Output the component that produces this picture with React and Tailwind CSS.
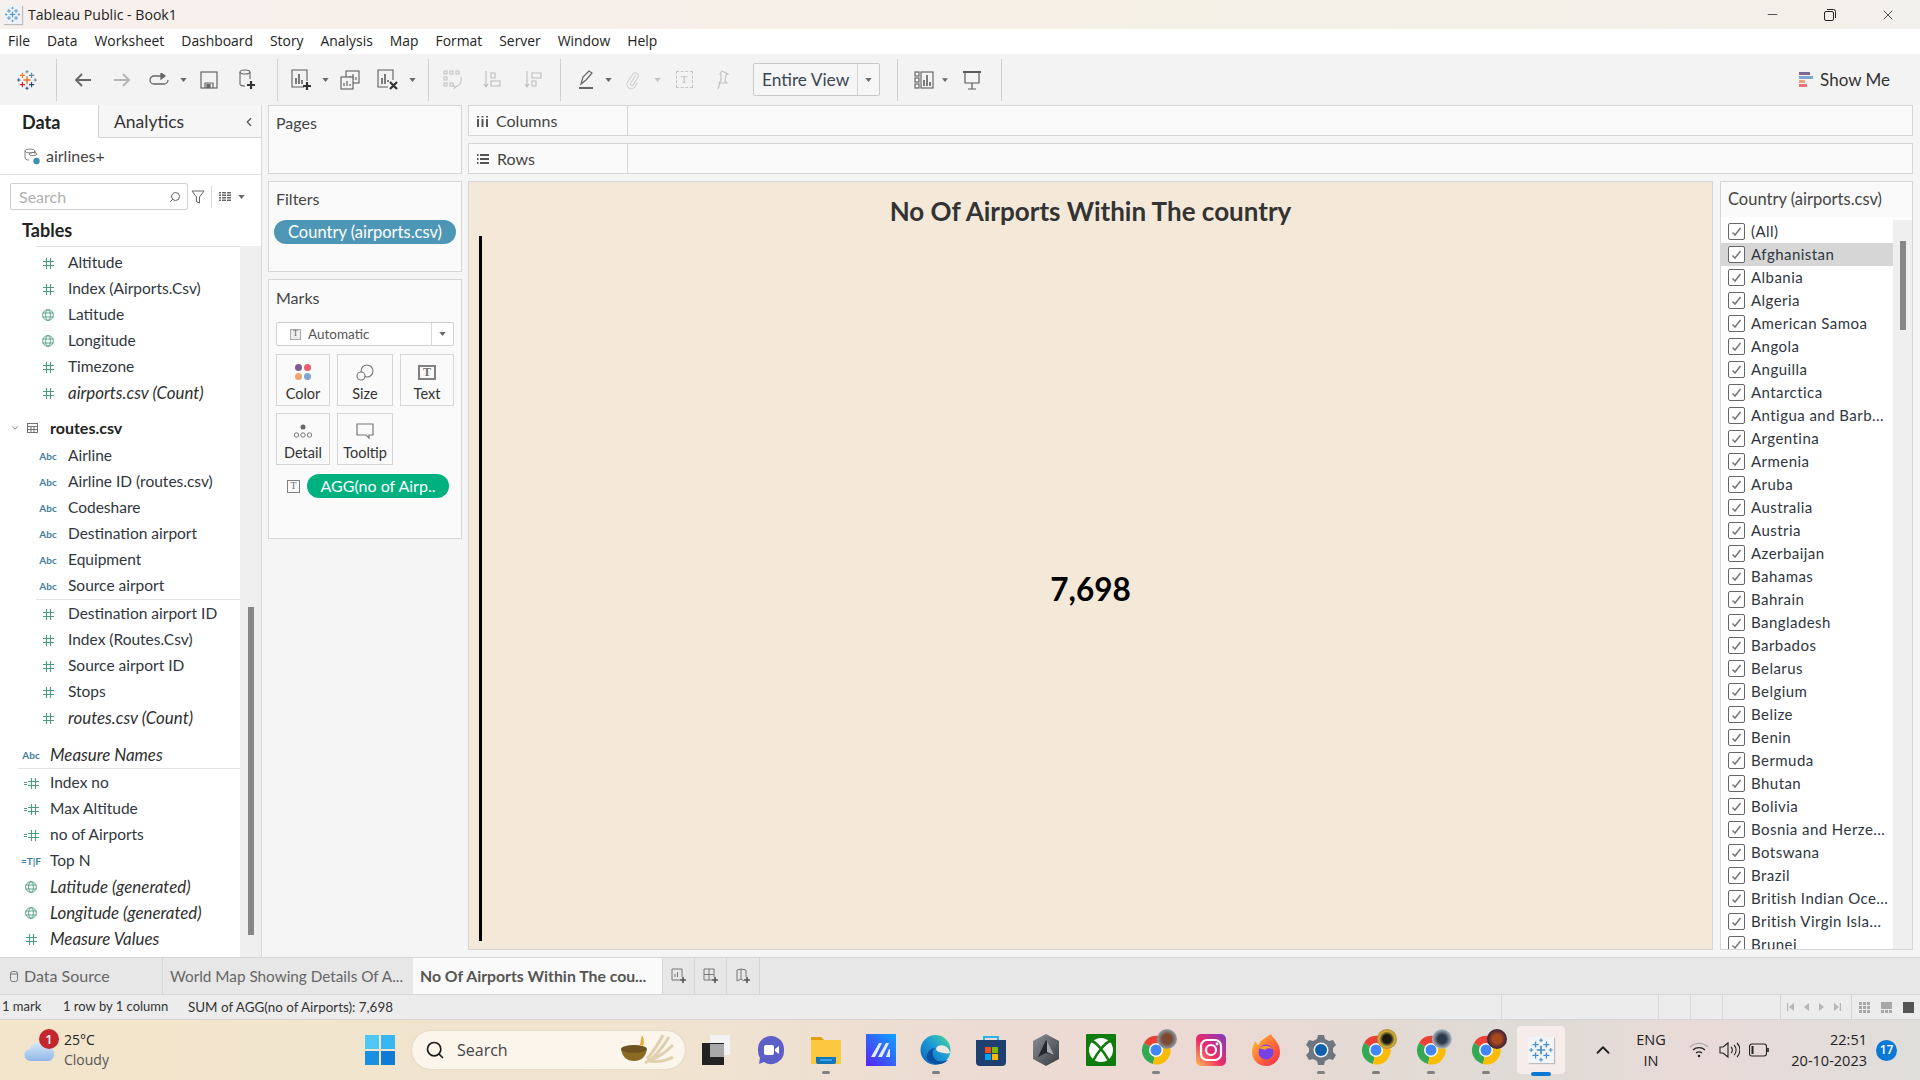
import React from 'react';
import { Search, X, Minus, ChevronUp, ChevronDown, ChevronLeft } from 'lucide-react';

const COUNTRIES = [
  '(All)', 'Afghanistan', 'Albania', 'Algeria', 'American Samoa', 'Angola', 'Anguilla', 'Antarctica',
  'Antigua and Barb...', 'Argentina', 'Armenia', 'Aruba', 'Australia', 'Austria', 'Azerbaijan', 'Bahamas',
  'Bahrain', 'Bangladesh', 'Barbados', 'Belarus', 'Belgium', 'Belize', 'Benin', 'Bermuda', 'Bhutan', 'Bolivia',
  'Bosnia and Herze...', 'Botswana', 'Brazil', 'British Indian Oce...', 'British Virgin Isla...', 'Brunei'
];

const MENU = ['File', 'Data', 'Worksheet', 'Dashboard', 'Story', 'Analysis', 'Map', 'Format', 'Server', 'Window', 'Help'];

const Caret = ({ light }) => (
  <svg width="7" height="4" viewBox="0 0 8 5"><path d="M0 0h8L4 5z" fill={light ? '#c4c4c4' : '#6a6a6a'} /></svg>
);

const Sep = () => <div className="h-[42px] w-px bg-[#cfcfcf]" />;

const Slot = ({ className, children }) => (
  <div className={`flex items-center justify-center ${className}`}>{children}</div>
);

const TableauMark = ({ size = 24, mono }) => {
  const c = mono
    ? ['#4a8fc4', '#4a8fc4', '#4a8fc4', '#4a8fc4', '#4a8fc4', '#4a8fc4']
    : ['#e8762d', '#c72035', '#5b879b', '#1f447e', '#59879b', '#e8762d'];
  const cross = (x, y, r, col, w) => (
    <path d={`M${x - r} ${y}H${x + r}M${x} ${y - r}V${y + r}`} stroke={col} strokeWidth={w} fill="none" />
  );
  return (
    <svg width={size} height={size} viewBox="0 0 24 24">
      {cross(12, 12, 4, c[5], 1.6)}
      {cross(7, 7, 2.8, c[0], 1.2)}
      {cross(17, 7, 2.8, c[2], 1.2)}
      {cross(7, 17, 2.8, c[1], 1.2)}
      {cross(17, 17, 2.8, c[3], 1.2)}
      {cross(12, 3, 1.8, c[2], 1)}
      {cross(12, 21, 1.8, c[3], 1)}
      {cross(3, 12, 1.8, c[3], 1)}
      {cross(21, 12, 1.8, c[4], 1)}
    </svg>
  );
};

function Toolbar() {
  return (
    <div className="flex h-[51px] shrink-0 items-center bg-[#f3f3f3]">
      <Slot className="w-[54px]"><TableauMark size={22} /></Slot>
      <div className="ml-[2px]"><Sep /></div>
      <Slot className="w-[52px]">
        <svg width="18" height="16" viewBox="0 0 18 16" fill="none" stroke="#666" strokeWidth="1.8"><path d="M17 8H2M8 2 2 8l6 6" /></svg>
      </Slot>
      <Slot className="w-[26px]">
        <svg width="18" height="16" viewBox="0 0 18 16" fill="none" stroke="#b3b3b3" strokeWidth="1.8"><path d="M1 8h15M10 2l6 6-6 6" /></svg>
      </Slot>
      <Slot className="ml-[5px] w-[38px]">
        <svg width="20" height="14" viewBox="0 0 20 14" fill="none" stroke="#666" strokeWidth="1.3"><path d="M15 3H5a4 4 0 0 0 0 8h10a4 4 0 0 0 4-4" /><path d="M12 0l4 3-4 3z" fill="#666" /></svg>
      </Slot>
      <Slot className="w-[10px]"><Caret /></Slot>
      <Slot className="w-[42px]">
        <svg width="18" height="18" viewBox="0 0 18 18" fill="none" stroke="#666" strokeWidth="1.2"><rect x="1" y="1" width="16" height="16" /><path d="M5 17v-5h8v5" /><rect x="7" y="13.5" width="3" height="3" fill="#666" /></svg>
      </Slot>
      <Slot className="w-[34px]">
        <svg width="18" height="22" viewBox="0 0 18 22" fill="none" stroke="#666" strokeWidth="1.1"><ellipse cx="7" cy="3" rx="5" ry="2" /><path d="M2 3v12c0 1 1.5 2 5 2M12 3v7" /><path d="M13 12v8M9 16h8" stroke="#333" strokeWidth="2.2" /></svg>
      </Slot>
      <div className="ml-[13px]"><Sep /></div>
      <Slot className="ml-[8px] w-[32px]">
        <svg width="22" height="22" viewBox="0 0 22 22" fill="none" stroke="#5c5c5c" strokeWidth="1.1"><path d="M13 18H1V1h15v11" /><path d="M5 15V9M8 15V5M11 15v-4" strokeWidth="1.6" /><path d="M16 13v8M12 17h8" stroke="#333" strokeWidth="2.2" /></svg>
      </Slot>
      <Slot className="ml-[2px] w-[10px]"><Caret /></Slot>
      <Slot className="w-[40px]">
        <svg width="20" height="20" viewBox="0 0 20 20" fill="none" stroke="#5c5c5c" strokeWidth="1.1"><rect x="6" y="1" width="13" height="12" fill="#f3f3f3" /><path d="M10 10V6M13 10V4M16 10V7" /><rect x="1" y="7" width="12" height="12" fill="#f3f3f3" /><path d="M4 16v-3M7 16v-5M10 16v-2" /></svg>
      </Slot>
      <Slot className="w-[36px]">
        <svg width="22" height="22" viewBox="0 0 22 22" fill="none" stroke="#5c5c5c" strokeWidth="1.1"><path d="M11 18H1V1h15v10" /><path d="M5 15V9M8 15V5M11 13v-2" strokeWidth="1.6" /><path d="M13 13l7 7M20 13l-7 7" stroke="#333" strokeWidth="2.2" /></svg>
      </Slot>
      <Slot className="ml-[1px] w-[10px]"><Caret /></Slot>
      <div className="ml-[11px]"><Sep /></div>
      <Slot className="w-[48px]">
        <svg width="20" height="20" viewBox="0 0 20 20" fill="none" stroke="#c2c2c2" strokeWidth="1.1"><path d="M1 1h3v3H1zM7 1h3v3H7zM13 1h3v3h-3zM1 7h3v3H1zM1 13h3v3H1zM7 13h3v3H7z" /><path d="M18 7c1 5-1 9-6 10" /><path d="M10 15l2 2-1 2" /></svg>
      </Slot>
      <Slot className="w-[30px]">
        <svg width="18" height="20" viewBox="0 0 18 20" fill="none" stroke="#bdbdbd" strokeWidth="1.1"><path d="M3 1v16M1 14l2 3 2-3" /><path d="M8 3h4v5H8zM8 11h9v5H8z" /></svg>
      </Slot>
      <Slot className="w-[52px]">
        <svg width="18" height="20" viewBox="0 0 18 20" fill="none" stroke="#bdbdbd" strokeWidth="1.1"><path d="M3 1v16M1 14l2 3 2-3" /><path d="M8 3h9v5H8zM8 11h4v5H8z" /></svg>
      </Slot>
      <div className="ml-px"><Sep /></div>
      <Slot className="ml-[9px] w-[32px]">
        <svg width="16" height="22" viewBox="0 0 16 22" fill="none" stroke="#666" strokeWidth="1.2"><path d="M3 15 5 8l6-6 3 2-6 7zM3 15l1-1" /><rect x="1" y="18" width="14" height="2" fill="#666" stroke="none" /></svg>
      </Slot>
      <Slot className="ml-[1px] w-[10px]"><Caret /></Slot>
      <Slot className="w-[40px]">
        <svg width="14" height="20" viewBox="0 0 16 22" fill="none" stroke="#cfcfcf" strokeWidth="1.2"><path d="M11 6 5 15a2 2 0 0 0 3 2l6-10a3.5 3.5 0 0 0-6-3L2 13a5 5 0 0 0 8 6l3-5" /></svg>
      </Slot>
      <Slot className="w-[8px]"><Caret light /></Slot>
      <Slot className="w-[46px]">
        <div className="flex h-[17px] w-[17px] items-center justify-center border border-dashed border-[#c4c4c4] font-['Liberation_Serif',serif] text-[11px] leading-none text-[#bdbdbd]">T</div>
      </Slot>
      <Slot className="w-[30px]">
        <svg width="16" height="20" viewBox="0 0 16 20" fill="none" stroke="#c4c4c4" strokeWidth="1.2"><path d="M8 1l6 3-2 1-1 6 2 2-8 0 2-2-0-6-1-1zM6 13l-2 6" /></svg>
      </Slot>
      <div className="ml-[16px] flex h-[33px] w-[127px] items-center rounded-[2px] border border-[#c9c9c9] bg-[#f6f6f6]">
        <div className="flex-1 pl-[8px] font-['Lato',sans-serif] text-[17.3px] leading-none text-[#3a4652]">Entire View</div>
        <Slot className="h-full w-[22px] border-l border-[#d4d4d4]"><Caret /></Slot>
      </div>
      <div className="ml-[17px]"><Sep /></div>
      <Slot className="ml-[8px] w-[36px]">
        <svg width="20" height="18" viewBox="0 0 20 18" fill="none" stroke="#5c5c5c" strokeWidth="1.1"><rect x="1" y="1" width="4" height="4" /><rect x="1" y="7" width="4" height="4" /><rect x="1" y="13" width="4" height="4" /><rect x="7" y="1" width="12" height="16" /><path d="M10 15V9M13 15V4M16 15v-4" strokeWidth="1.6" /></svg>
      </Slot>
      <Slot className="w-[6px]"><Caret /></Slot>
      <Slot className="w-[48px]">
        <svg width="18" height="20" viewBox="0 0 18 20" fill="none" stroke="#5c5c5c" strokeWidth="1.2"><path d="M0 2h18" strokeWidth="2" /><path d="M2 2v11h14V2M9 13v6M5 19h8" /></svg>
      </Slot>
      <div className="ml-[5px]"><Sep /></div>
      <div className="ml-auto mr-[30px] flex items-center gap-[7px]">
        <div className="flex w-[14px] flex-col gap-px">
          <div className="h-[3px] w-[11px] bg-[#7b6a94]" />
          <div className="h-[3px] w-[14px] bg-[#7fa6cf]" />
          <div className="h-[3px] w-[6px] bg-[#eba276]" />
          <div className="h-[3px] w-[8px] bg-[#ee6f7c]" />
        </div>
        <span className="font-['Lato',sans-serif] text-[17px] text-[#333]">Show Me</span>
      </div>
    </div>
  );
}

const Hash = ({ color = '#4c9c80' }) => (
  <svg width="11" height="11" viewBox="0 0 11 11" fill="none" stroke={color} strokeWidth="1.1"><path d="M3.5 0v11M7.5 0v11M0 3.5h11M0 7.5h11" /></svg>
);

const Globe = () => (
  <svg width="12" height="12" viewBox="0 0 12 12" fill="none" stroke="#4c9c80" strokeWidth="0.9"><circle cx="6" cy="6" r="5.4" /><ellipse cx="6" cy="6" rx="2.4" ry="5.4" /><path d="M0.6 4h10.8M0.6 8h10.8" /></svg>
);

const Abc = () => <span className="text-[10px] font-bold leading-none text-[#3f7d9e]">Abc</span>;

const CalcHash = () => (
  <span className="flex items-center gap-px">
    <span className="h-[3px] w-[3px] border-y border-[#4c9c80]" />
    <Hash />
  </span>
);

const TopN = () => (
  <span className="flex items-center text-[10px] font-bold leading-none text-[#3f7d9e]">=T|F</span>
);

const ICONS = { hash: <Hash />, globe: <Globe />, abc: <Abc />, calc: <CalcHash />, topn: <TopN /> };

function Field({ icon, label, italic, nested = true }) {
  return (
    <div className="flex h-[26px] items-center">
      <div className={nested ? 'flex w-[68px] justify-center pl-[32px] pr-[4px]' : 'flex w-[50px] justify-center pl-[14px] pr-[2px]'}>
        {ICONS[icon]}
      </div>
      <span className={italic ? 'text-[16.9px] italic text-[#2f2f2f]' : 'text-[15.5px] text-[#2f3640]'}>{label}</span>
    </div>
  );
}

function DataPane() {
  return (
    <div className="flex w-[262px] shrink-0 flex-col border-r border-[#d9d9d9] bg-white">
      <div className="flex h-[33px] shrink-0">
        <div className="flex w-[98px] items-center pl-[22px] pt-px text-[18px] font-bold text-[#222]">Data</div>
        <div className="flex flex-1 items-center justify-between border-b border-l border-[#d4d4d4] bg-[#f6f6f6] pl-[15px] pr-[5px] pt-[2px] text-[17.5px] text-[#333]">
          Analytics
          <ChevronLeft size={14} color="#555" />
        </div>
      </div>
      <div className="flex h-[37px] shrink-0 items-center border-b border-[#e2e2e2] pl-[24px]">
        <svg width="16" height="17" viewBox="0 0 16 17" fill="none" stroke="#777" strokeWidth="0.9"><ellipse cx="6" cy="3" rx="5" ry="2" /><path d="M1 3v7c0 1 1.5 2 4 2M11 3v3" /><ellipse cx="9" cy="6" rx="4" ry="1.6" /><circle cx="12.5" cy="13" r="3.2" fill="#3e8fb5" stroke="none" /></svg>
        <span className="ml-[6px] text-[16px] text-[#444]">airlines+</span>
      </div>
      <div className="flex h-[38px] shrink-0 items-center pl-[10px] pt-[5px]">
        <div className="flex h-[27px] w-[178px] items-center justify-between rounded-[2px] border border-[#cfcfcf] pl-[8px] pr-[6px] text-[16px] text-[#b0b0b0]">
          Search
          <Search size={12} color="#666" className="-scale-x-100" />
        </div>
        <svg className="ml-[3px]" width="14" height="14" viewBox="0 0 14 14" fill="none" stroke="#666" strokeWidth="1"><path d="M1 1h12L8.5 7v6l-3-1.5V7z" /></svg>
        <div className="ml-[6px] h-[22px] w-px bg-[#dcdcdc]" />
        <svg className="ml-[7px]" width="12" height="9" viewBox="0 0 12 9" fill="#666"><path d="M0 0h2v1.5H0zM3 0h4v1.5H3zM8 0h4v1.5H8zM0 2.5h2V4H0zM3 2.5h4V4H3zM8 2.5h4V4H8zM0 5h2v1.5H0zM3 5h4v1.5H3zM8 5h4v1.5H8zM0 7.5h2V9H0zM3 7.5h4V9H3zM8 7.5h4V9H8z" /></svg>
        <div className="ml-[7px]"><Caret /></div>
      </div>
      <div className="flex h-[33px] shrink-0 items-center pl-[22px] pt-[2px] text-[18px] font-bold text-[#222]">Tables</div>
      <div className="flex min-h-0 flex-1">
        <div className="w-[240px] overflow-hidden">
          <div className="ml-[36px] h-px bg-[#e2e2e2]" />
          <div className="h-[3px]" />
          <Field icon="hash" label="Altitude" />
          <Field icon="hash" label="Index (Airports.Csv)" />
          <Field icon="globe" label="Latitude" />
          <Field icon="globe" label="Longitude" />
          <Field icon="hash" label="Timezone" />
          <Field icon="hash" label="airports.csv (Count)" italic />
          <div className="mt-[9px] flex h-[26px] items-center pl-[10px]">
            <ChevronDown size={10} color="#666" />
            <svg className="ml-[7px]" width="11" height="10" viewBox="0 0 11 10" fill="none" stroke="#666" strokeWidth="0.9"><rect x="0.5" y="0.5" width="10" height="9" /><path d="M0.5 3.5h10M0.5 6.5h10M4 3.5v6M7 3.5v6" /></svg>
            <span className="ml-[12px] text-[16px] font-bold text-[#222]">routes.csv</span>
          </div>
          <div className="h-[2px]" />
          <Field icon="abc" label="Airline" />
          <Field icon="abc" label="Airline ID (routes.csv)" />
          <Field icon="abc" label="Codeshare" />
          <Field icon="abc" label="Destination airport" />
          <Field icon="abc" label="Equipment" />
          <Field icon="abc" label="Source airport" />
          <div className="ml-[36px] h-[2px] border-t border-[#e2e2e2]" />
          <Field icon="hash" label="Destination airport ID" />
          <Field icon="hash" label="Index (Routes.Csv)" />
          <Field icon="hash" label="Source airport ID" />
          <Field icon="hash" label="Stops" />
          <Field icon="hash" label="routes.csv (Count)" italic />
          <div className="h-[11px]" />
          <Field icon="abc" label="Measure Names" italic nested={false} />
          <div className="ml-[18px] h-[2px] border-t border-[#e2e2e2]" />
          <Field icon="calc" label="Index no" nested={false} />
          <Field icon="calc" label="Max Altitude" nested={false} />
          <Field icon="calc" label="no of Airports" nested={false} />
          <Field icon="topn" label="Top N" nested={false} />
          <Field icon="globe" label="Latitude (generated)" italic nested={false} />
          <Field icon="globe" label="Longitude (generated)" italic nested={false} />
          <Field icon="hash" label="Measure Values" italic nested={false} />
        </div>
        <div className="flex flex-1 flex-col bg-[#efefef] pl-[8px] pt-[361px]">
          <div className="h-[328px] w-[6px] bg-[#878787]" />
        </div>
      </div>
    </div>
  );
}

const Card = ({ label, children }) => (
  <div className="flex h-[52px] flex-col items-center justify-between border border-[#d6d6d6] pb-[2px] pt-[6px] text-[14.5px] leading-[18px] text-[#333]">
    <div className="flex h-[22px] items-center">{children}</div>
    {label}
  </div>
);

const TBox = ({ size }) => (
  <div className={size === 'lg'
    ? "flex h-[15px] w-[18px] items-center justify-center border-2 border-[#808080] font-['Liberation_Serif',serif] text-[12px] font-bold leading-none text-[#707070]"
    : "flex h-[13px] w-[13px] items-center justify-center border border-[#808080] font-['Liberation_Serif',serif] text-[10px] leading-none text-[#707070]"}>
    T
  </div>
);

function Shelves() {
  return (
    <div className="ml-[6px] flex w-[194px] shrink-0 flex-col gap-[7px]">
      <div className="h-[69px] border border-[#d6d6d6] bg-[#fafafa] pl-[7px] pt-[5px] text-[16px] text-[#444]">Pages</div>
      <div className="h-[91px] border border-[#d6d6d6] bg-[#fafafa] px-[5px] pt-[5px] text-[16px] text-[#444]">
        <div className="pl-[2px]">Filters</div>
        <div className="mt-[9px] flex h-[24px] items-center justify-center rounded-full bg-[#4e96b5] text-[16.5px] text-white">Country (airports.csv)</div>
      </div>
      <div className="h-[260px] border border-[#d6d6d6] bg-[#fafafa] px-[7px] pt-[6px] text-[16px] text-[#444]">
        <div>Marks</div>
        <div className="mt-[12px] flex h-[24px] items-center rounded-[2px] border border-[#cfcfcf] bg-white">
          <div className="flex flex-1 items-center gap-[7px] pl-[13px] text-[13.5px] text-[#555]">
            <div className="flex h-[11px] w-[11px] items-center justify-center border border-[#aaa] bg-[#eee] font-['Liberation_Serif',serif] text-[8px] leading-none">T</div>
            Automatic
          </div>
          <Slot className="h-full w-[22px] border-l border-[#d9d9d9]"><Caret /></Slot>
        </div>
        <div className="mt-[8px] grid grid-cols-[54px_56px_54px] gap-x-[7px] gap-y-[7px]">
          <Card label="Color">
            <div className="grid grid-cols-2 gap-[2px]">
              <div className="h-[7px] w-[7px] rounded-full bg-[#7b5e8f]" />
              <div className="h-[7px] w-[7px] rounded-full bg-[#ef5b6c]" />
              <div className="h-[7px] w-[7px] rounded-full bg-[#f0a470]" />
              <div className="h-[7px] w-[7px] rounded-full bg-[#7ea6d0]" />
            </div>
          </Card>
          <Card label="Size">
            <svg width="18" height="17" viewBox="0 0 18 17" fill="none" stroke="#777" strokeWidth="1.1"><circle cx="11" cy="7" r="6" /><circle cx="5" cy="12" r="4" fill="#fafafa" /></svg>
          </Card>
          <Card label="Text"><TBox size="lg" /></Card>
          <Card label="Detail">
            <svg width="20" height="14" viewBox="0 0 20 14" fill="none" stroke="#777" strokeWidth="1"><circle cx="10" cy="3" r="2.5" fill="#666" stroke="none" /><circle cx="3.5" cy="11" r="2.2" /><circle cx="10" cy="11" r="2.2" /><circle cx="16.5" cy="11" r="2.2" /></svg>
          </Card>
          <Card label="Tooltip">
            <svg width="18" height="17" viewBox="0 0 18 17" fill="none" stroke="#777" strokeWidth="1.2"><path d="M1 1h16v11h-4v3l-3-3H1z" /></svg>
          </Card>
        </div>
        <div className="mt-[9px] flex items-center">
          <div className="ml-[11px] w-[13px]"><TBox /></div>
          <div className="ml-[7px] flex h-[24px] w-[142px] items-center justify-center rounded-full bg-[#00b180] text-[16px] text-white">AGG(no of Airp..</div>
        </div>
      </div>
    </div>
  );
}

function Legend() {
  return (
    <div className="flex w-[193px] shrink-0 flex-col overflow-hidden border border-[#d6d6d6] bg-white">
      <div className="flex h-[35px] shrink-0 items-center bg-[#fafafa] pl-[7px] text-[16.5px] text-[#444]">Country (airports.csv)</div>
      <div className="flex min-h-0 flex-1">
        <div className="w-[172px] overflow-hidden pt-[3px]">
          {COUNTRIES.map(name => (
            <div key={name} className={name === 'Afghanistan' ? 'flex h-[23px] items-center bg-[#d6d6d6] pl-[7px]' : 'flex h-[23px] items-center pl-[7px]'}>
              <div className="flex h-[17px] w-[17px] shrink-0 items-center justify-center rounded-[2px] border border-[#666] bg-white">
                <svg width="11" height="10" viewBox="0 0 11 10" fill="none" stroke="#777" strokeWidth="1.5"><path d="M1.5 5.5 4 8l5.5-7" /></svg>
              </div>
              <span className="ml-[6px] whitespace-nowrap text-[15px] tracking-[0.45px] text-[#2f3640]">{name}</span>
            </div>
          ))}
        </div>
        <div className="mt-[3px] flex-1 bg-[#efefef] pl-[7px] pt-[21px]">
          <div className="h-[89px] w-[6px] bg-[#878787]" />
        </div>
      </div>
    </div>
  );
}

function ViewArea() {
  return (
    <div className="ml-[6px] mr-[7px] flex min-w-0 flex-1 flex-col">
      <div className="flex h-[31px] shrink-0 border border-[#d6d6d6] bg-[#fafafa]">
        <div className="flex w-[159px] items-center gap-[8px] border-r border-[#d6d6d6] pl-[8px] pt-px text-[16px] text-[#444]">
          <svg width="11" height="11" viewBox="0 0 11 11" fill="#555"><rect x="0" y="3" width="2" height="8" /><rect x="4.5" y="3" width="2" height="8" /><rect x="9" y="3" width="2" height="8" /><rect x="0" y="0" width="2" height="1.5" /><rect x="4.5" y="0" width="2" height="1.5" /><rect x="9" y="0" width="2" height="1.5" /></svg>
          Columns
        </div>
      </div>
      <div className="mt-[7px] flex h-[31px] shrink-0 border border-[#d6d6d6] bg-[#fafafa]">
        <div className="flex w-[159px] items-center gap-[8px] border-r border-[#d6d6d6] pl-[8px] pt-px text-[16px] text-[#444]">
          <svg width="12" height="10" viewBox="0 0 12 10" fill="#555"><rect x="3" y="0" width="9" height="2" /><rect x="3" y="4" width="9" height="2" /><rect x="3" y="8" width="9" height="2" /><rect x="0" y="0" width="1.5" height="2" /><rect x="0" y="4" width="1.5" height="2" /><rect x="0" y="8" width="1.5" height="2" /></svg>
          Rows
        </div>
      </div>
      <div className="mt-[7px] flex h-[769px] shrink-0 gap-[7px]">
        <div className="flex flex-1 flex-col border border-[#d6d6d6] bg-[#f4e9d9]">
          <div className="flex h-[54px] shrink-0 items-end justify-center pb-[12px] text-[26px] font-bold leading-none text-[#333]">No Of Airports Within The country</div>
          <div className="ml-[10px] flex min-h-0 flex-1 pb-[8px]">
            <div className="w-[3px] bg-black" />
            <div className="flex flex-1 items-center justify-center pr-[13px] pt-[3px] text-[31.5px] font-bold text-black">7,698</div>
          </div>
        </div>
        <Legend />
      </div>
    </div>
  );
}

function Tabs() {
  return (
    <div className="flex h-[37px] shrink-0 border-t border-[#d6d6d6] bg-[#e7e7e7] text-[15.3px] text-[#666]">
      <div className="flex w-[163px] items-center gap-[6px] border-r border-[#d6d6d6] pl-[10px] text-[16px]">
        <svg width="8" height="11" viewBox="0 0 8 11" fill="none" stroke="#777" strokeWidth="1"><rect x="0.5" y="0.5" width="7" height="10" rx="2" /><path d="M0.5 3h7" /></svg>
        Data Source
      </div>
      <div className="flex w-[250px] items-center whitespace-nowrap pl-[7px]">World Map Showing Details Of A...</div>
      <div className="flex w-[250px] items-center whitespace-nowrap border-r border-[#d6d6d6] bg-[#fafafa] pl-[7px] text-[15.8px] font-bold text-[#555]">No Of Airports Within The cou...</div>
      <Slot className="w-[32px] border-r border-[#d6d6d6]">
        <svg width="16" height="16" viewBox="0 0 16 16" fill="none" stroke="#777" strokeWidth="1"><path d="M9 12H1V1h10v8" /><path d="M4 9V6M6.5 9V4" /><path d="M12 9v6M9 12h6" strokeWidth="1.6" stroke="#555" /></svg>
      </Slot>
      <Slot className="w-[32px] border-r border-[#d6d6d6]">
        <svg width="16" height="16" viewBox="0 0 16 16" fill="none" stroke="#777" strokeWidth="1"><path d="M9 12H1V1h10v8M1 6.5h10M6 1v11" /><path d="M12 9v6M9 12h6" strokeWidth="1.6" stroke="#555" /></svg>
      </Slot>
      <Slot className="w-[33px] border-r border-[#d6d6d6]">
        <svg width="16" height="16" viewBox="0 0 16 16" fill="none" stroke="#777" strokeWidth="1"><path d="M9 13 6 11l-4 2V2l4-1 5 1v7M6 1v10" /><path d="M12 9v6M9 12h6" strokeWidth="1.6" stroke="#555" /></svg>
      </Slot>
    </div>
  );
}

function StatusBar() {
  return (
    <div className="flex h-[26px] shrink-0 items-center border-b border-t border-[#d6d6d6] bg-[#ececec] text-[13px] text-[#333]">
      <span className="ml-[2px] w-[61px]">1 mark</span>
      <span className="w-[125px]">1 row by 1 column</span>
      <span className="text-[13.4px]">SUM of AGG(no of Airports): 7,698</span>
      <div className="ml-auto flex h-full">
        <div className="w-[157px] border-l border-[#d6d6d6]" />
        <div className="w-[32px] border-l border-[#d6d6d6]" />
        <div className="w-[32px] border-l border-[#d6d6d6]" />
        <div className="w-[58px] border-l border-[#d6d6d6]" />
        <div className="flex w-[71px] items-center justify-center gap-[8px] border-l border-[#d6d6d6] pr-[4px]">
          <svg width="7" height="8" viewBox="0 0 7 8" fill="#b5b5b5"><rect width="1.2" height="8" /><path d="M7 0v8L2 4z" /></svg>
          <svg className="ml-[2px]" width="5" height="8" viewBox="0 0 5 8" fill="#b5b5b5"><path d="M5 0v8L0 4z" /></svg>
          <svg className="ml-[2px]" width="5" height="8" viewBox="0 0 5 8" fill="#b5b5b5"><path d="M0 0v8l5-4z" /></svg>
          <svg className="ml-[2px]" width="7" height="8" viewBox="0 0 7 8" fill="#b5b5b5"><rect x="5.8" width="1.2" height="8" /><path d="M0 0v8l5-4z" /></svg>
        </div>
        <div className="flex w-[69px] items-center justify-center gap-[11px] border-l border-[#d6d6d6]">
          <svg width="11" height="11" viewBox="0 0 11 11" fill="#a8a8a8"><path d="M0 0h3v3H0zM4 0h3v3H4zM8 0h3v3H8zM0 4h3v3H0zM4 4h3v3H4zM8 4h3v3H8zM0 8h3v3H0zM4 8h3v3H4zM8 8h3v3H8z" /></svg>
          <svg width="11" height="11" viewBox="0 0 11 11" fill="#a8a8a8"><path d="M0 0h11v7H0zM0 8h3v3H0zM4 8h3v3H4zM8 8h3v3H8z" /></svg>
          <svg width="11" height="11" viewBox="0 0 11 11" fill="#555"><path d="M0 0h11v11H0z" /></svg>
        </div>
      </div>
    </div>
  );
}

const Chrome = ({ avatar }) => (
  <div className="relative h-[30px] w-[30px]">
    <svg width="30" height="30" viewBox="0 0 30 30">
      <path d="M15 15 3 8A14 14 0 0 1 28 9z" fill="#ea4335" />
      <path d="M15 15 3 8a14 14 0 0 0 9 21z" fill="#34a853" />
      <path d="M15 15l13-6a14 14 0 0 1-16 20z" fill="#fbbc05" />
      <circle cx="15" cy="15" r="7" fill="#fff" />
      <circle cx="15" cy="15" r="5.5" fill="#4285f4" />
    </svg>
    <div className={`absolute -right-[6px] -top-[6px] h-[20px] w-[20px] rounded-full ${avatar}`} />
  </div>
);

const AppIcon = ({ running, children }) => (
  <div className="relative flex h-full w-[55px] shrink-0 items-center justify-center">
    {children}
    {running && <div className="absolute bottom-[6px] h-[3px] w-[8px] rounded-full bg-[#808080]" />}
  </div>
);

function Taskbar() {
  return (
    <div className="flex h-[60px] shrink-0 items-center bg-[linear-gradient(90deg,#f3e5cb_0%,#f0e4d0_35%,#ecdcd3_50%,#ecd9d3_62%,#dedbd5_80%,#e9dad7_88%,#dfdedb_100%)] font-['Open_Sans',sans-serif]">
      <div className="relative ml-[24px] flex w-[328px] shrink-0 items-center">
        <svg width="32" height="24" viewBox="0 0 32 24"><defs><linearGradient id="cloud" x1="0" y1="0" x2="0" y2="1"><stop offset="0" stopColor="#d7e6f7" /><stop offset="1" stopColor="#8fb8e8" /></linearGradient></defs><path d="M7 23a6 6 0 0 1-1-12 8 8 0 0 1 15-2 7 7 0 0 1 4 14z" fill="url(#cloud)" /></svg>
        <div className="absolute left-[15px] top-[-1px] flex h-[20px] w-[20px] items-center justify-center rounded-full bg-[#c4262e] text-[13px] font-semibold leading-none text-white">1</div>
        <div className="ml-[8px] text-[14px] leading-[20px] text-[#222]">
          <div>25°C</div>
          <div className="text-[#555]">Cloudy</div>
        </div>
      </div>
      <AppIcon>
        <div className="grid grid-cols-2 gap-[2px]">
          <div className="h-[14px] w-[14px] bg-[#4fc6f4]" />
          <div className="h-[14px] w-[14px] bg-[#38b6f1]" />
          <div className="h-[14px] w-[14px] bg-[#1a8ee0]" />
          <div className="h-[14px] w-[14px] bg-[#0f7bd4]" />
        </div>
      </AppIcon>
      <div className="ml-[5px] flex h-[38px] w-[273px] shrink-0 items-center rounded-full bg-[#fbf5ec] pl-[13px] shadow-[0_0_2px_#cfc4b0]">
        <Search size={20} color="#1d1d1d" strokeWidth={2} />
        <span className="ml-[12px] flex-1 text-[16px] text-[#444]">Search</span>
        <svg className="mr-[10px]" width="56" height="34" viewBox="0 0 56 34">
          <path d="M26 30Q38 24 50 4M34 26Q44 22 54 12M30 28q14 2 24-4M28 26Q38 14 44 2" stroke="#e0d0ae" strokeWidth="3" fill="none" />
          <path d="M2 16q13 7 26 0-2 12-13 12T2 16z" fill="#8d6a24" />
          <ellipse cx="15" cy="16" rx="13" ry="4" fill="#6e5320" />
          <path d="M23 2q3 5 1 11l-3-1z" fill="#f0a628" />
        </svg>
      </div>
      <div className="ml-[3px] flex h-full">
        <AppIcon>
          <div className="relative h-[30px] w-[28px]">
            <div className="absolute right-0 top-0 h-[20px] w-[20px] bg-[#f3f3f3]" />
            <div className="absolute bottom-0 left-0 h-[22px] w-[22px] bg-[#222]" />
            <div className="absolute right-[6px] top-[9px] h-[13px] w-[14px] bg-[#a8a8a8]" />
          </div>
        </AppIcon>
        <AppIcon>
          <svg width="30" height="30" viewBox="0 0 30 30"><path d="M15 1a13 13 0 0 1 13 13v2a13 13 0 0 1-20 11l-5 2 1-6a13 13 0 0 1-2-7v-2A13 13 0 0 1 15 1z" fill="#5b5fc7" /><rect x="8" y="10" width="10" height="10" rx="2" fill="#fff" /><path d="M19 14l4-3v8l-4-3z" fill="#fff" /></svg>
        </AppIcon>
        <AppIcon running>
          <svg width="30" height="30" viewBox="0 0 30 30"><path d="M0 2h10l3 3h17v24H0z" fill="#fbc83f" /><path d="M0 2h10l3 3H0z" fill="#e0a10f" /><path d="M5 22h20v5a2 2 0 0 1-2 2H7a2 2 0 0 1-2-2z" fill="#0f75bd" /><rect x="9" y="24" width="12" height="2" fill="#3ea2e2" /></svg>
        </AppIcon>
        <AppIcon>
          <svg width="30" height="32" viewBox="0 0 30 32"><defs><linearGradient id="ma" x1="0" y1="1" x2="1" y2="0"><stop offset="0" stopColor="#5a22f5" /><stop offset="1" stopColor="#0da5ff" /></linearGradient></defs><rect width="30" height="32" fill="url(#ma)" /><path d="M5 23 13 9h3L9 23zM12 23 20 9h3l-7 14zM20 23l3-8h1v8z" fill="#e4ecff" /></svg>
        </AppIcon>
        <AppIcon running>
          <svg width="31" height="32" viewBox="0 0 31 32"><defs><linearGradient id="edge" x1="0" y1="1" x2="1" y2="0"><stop offset="0" stopColor="#0b5fb0" /><stop offset="0.55" stopColor="#1d9cd8" /><stop offset="1" stopColor="#4fdc8c" /></linearGradient></defs><circle cx="15.5" cy="16" r="15" fill="url(#edge)" /><path d="M30 19c-1-7-8-9-12-7-3 2-2 5 1 6 4 1 8 2 11 1z" fill="#f0e8de" /><path d="M28 26c-8 3-14 1-15-5-1-3 0-6 3-7-6 0-10 5-9 11 3 5 14 8 21 1z" fill="#0b4f9e" /></svg>
        </AppIcon>
        <AppIcon>
          <svg width="30" height="32" viewBox="0 0 30 32"><path d="M8 8V3h14v5" fill="none" stroke="#2bb3e8" strokeWidth="2" /><path d="M0 6h30v22a4 4 0 0 1-4 4H4a4 4 0 0 1-4-4z" fill="#1d4070" /><rect x="9" y="13" width="6" height="6" fill="#f25022" /><rect x="16" y="13" width="6" height="6" fill="#7fba00" /><rect x="9" y="20" width="6" height="6" fill="#00a4ef" /><rect x="16" y="20" width="6" height="6" fill="#ffb900" /></svg>
        </AppIcon>
        <AppIcon>
          <svg width="28" height="32" viewBox="0 0 28 32"><defs><linearGradient id="hex" x1="0" y1="0" x2="1" y2="1"><stop offset="0" stopColor="#8b9096" /><stop offset="1" stopColor="#3a3d42" /></linearGradient></defs><path d="M14 0l13 7v18l-13 7-13-7V7z" fill="url(#hex)" /><path d="M14 6l8 15-8-2-8 4z" fill="#25272b" /><path d="M15 7l7 14-7-3z" fill="#a6abb0" /></svg>
        </AppIcon>
        <AppIcon>
          <svg width="30" height="32" viewBox="0 0 30 32"><rect width="30" height="32" rx="1" fill="#107c10" /><circle cx="15" cy="16" r="12" fill="#fff" /><path d="M6 7C11 9 19 19 23 27M24 7C19 9 11 19 7 27" fill="none" stroke="#107c10" strokeWidth="2.6" /></svg>
        </AppIcon>
        <AppIcon running><Chrome avatar="bg-[radial-gradient(circle,#7a4a35_35%,#8ea0ad_70%)]" /></AppIcon>
        <AppIcon>
          <svg width="30" height="32" viewBox="0 0 30 32"><defs><linearGradient id="ig" x1="0" y1="1" x2="1" y2="0"><stop offset="0" stopColor="#fdc04f" /><stop offset="0.45" stopColor="#ee2a66" /><stop offset="1" stopColor="#7a3bc4" /></linearGradient></defs><rect width="30" height="32" rx="5" fill="url(#ig)" /><rect x="5" y="6" width="20" height="20" rx="6" fill="none" stroke="#fff" strokeWidth="2.2" /><circle cx="15" cy="16" r="5" fill="none" stroke="#fff" strokeWidth="2.2" /><circle cx="21" cy="10" r="1.4" fill="#fff" /></svg>
        </AppIcon>
        <AppIcon>
          <svg width="30" height="32" viewBox="0 0 30 32"><defs><linearGradient id="ff" x1="0" y1="0" x2="1" y2="1"><stop offset="0" stopColor="#ffcb2e" /><stop offset="0.5" stopColor="#ff7139" /><stop offset="1" stopColor="#f0264f" /></linearGradient></defs><path d="M20 0c1 4 9 8 9 18a14 14 0 0 1-28 0C1 13 3 9 5 7c0 3 2 4 3 4 0-4 6-7 12-11z" fill="url(#ff)" /><circle cx="15" cy="18" r="7.5" fill="#7542e5" /><path d="M8 14q8-5 14 1-6-2-8 1z" fill="#ff9a2e" /></svg>
        </AppIcon>
        <AppIcon running>
          <svg width="30" height="30" viewBox="0 0 30 30"><path d="M12 0h6l1 4 4 2 4-1 3 5-3 3v4l3 3-3 5-4-1-4 2-1 4h-6l-1-4-4-2-4 1-3-5 3-3v-4L0 10l3-5 4 1 4-2z" fill="#6e7780" /><circle cx="15" cy="15" r="7.5" fill="#f0f0f0" /><circle cx="15" cy="15" r="6" fill="#0f5fae" /></svg>
        </AppIcon>
        <AppIcon running><Chrome avatar="bg-[radial-gradient(circle,#1b1b14_30%,#c9b13a_55%,#a82c28_100%)]" /></AppIcon>
        <AppIcon running><Chrome avatar="bg-[radial-gradient(circle,#2c3a4c_30%,#c7d1d6_75%)]" /></AppIcon>
        <AppIcon running><Chrome avatar="bg-[radial-gradient(circle,#a8481c_30%,#2c1c3c_75%)]" /></AppIcon>
        <AppIcon>
          <div className="flex h-[48px] w-[48px] items-center justify-center rounded-[4px] bg-[#f6ecea]">
            <div className="flex h-[26px] w-[26px] items-center justify-center bg-[#f2f5f7] shadow-[1px_1px_1px_#bbb]">
              <TableauMark size={26} mono />
            </div>
          </div>
          <div className="absolute bottom-[4px] h-[4px] w-[20px] rounded-full bg-[#0a78d4]" />
        </AppIcon>
      </div>
      <Slot className="ml-[15px] w-[40px]"><ChevronUp size={22} color="#222" strokeWidth={2} /></Slot>
      <div className="ml-[2px] w-[52px] text-center text-[14.5px] leading-[21px] text-[#222]">
        <div>ENG</div>
        <div>IN</div>
      </div>
      <svg className="ml-[12px]" width="20" height="16" viewBox="0 0 20 16" fill="none" stroke="#222" strokeWidth="1.3"><path d="M1 5a13 13 0 0 1 18 0" stroke="#aaa" /><path d="M4 8a9 9 0 0 1 12 0M7 11a5 5 0 0 1 6 0" /><circle cx="10" cy="14" r="1.3" fill="#222" stroke="none" /></svg>
      <svg className="ml-[10px]" width="21" height="18" viewBox="0 0 21 18" fill="none" stroke="#222" strokeWidth="1.1"><path d="M1 6v6h3l5 4V2L4 6z" /><path d="M12 6a4 4 0 0 1 0 6M15 4a7 7 0 0 1 0 10M18 2a10 10 0 0 1 0 14" /></svg>
      <svg className="ml-[9px]" width="20" height="14" viewBox="0 0 20 14" fill="none" stroke="#222" strokeWidth="1.1"><rect x="0.5" y="1" width="17" height="12" rx="2.5" /><rect x="2.5" y="3" width="2" height="8" fill="#222" stroke="none" /><path d="M19 5v4" strokeWidth="1.6" /></svg>
      <div className="ml-[10px] w-[88px] text-right text-[14.5px] leading-[21px] text-[#222]">
        <div>22:51</div>
        <div>20-10-2023</div>
      </div>
      <div className="ml-[9px] flex h-[21px] w-[21px] items-center justify-center rounded-full bg-[#0a78d4] text-[12px] font-semibold leading-none text-white">17</div>
    </div>
  );
}

export default function App() {
  return (
    <div className="flex h-[1080px] w-[1920px] flex-col overflow-hidden bg-[#f5f5f5] font-['Lato',sans-serif]">
      <div className="flex h-[29px] shrink-0 items-center bg-[linear-gradient(90deg,#f7f0ec_0%,#f7efe9_30%,#f5f0e6_60%,#f2f0ea_100%)] font-['Open_Sans',sans-serif]">
        <div className="ml-[3px] flex h-[19px] w-[19px] items-center justify-center bg-[#eef2f5] shadow-[1px_1px_1px_#bbb]">
          <TableauMark size={17} mono />
        </div>
        <span className="ml-[6px] text-[14.1px] text-[#222]">Tableau Public - Book1</span>
        <div className="ml-auto mr-[3px] flex h-full items-center">
          <Slot className="w-[58px]"><Minus size={15} color="#222" strokeWidth={1.2} /></Slot>
          <Slot className="w-[58px]">
            <svg width="12" height="12" viewBox="0 0 12 12" fill="none" stroke="#222" strokeWidth="1"><rect x="0.5" y="2.5" width="9" height="9" rx="1.5" /><path d="M3 0.5h6.5a2 2 0 0 1 2 2V9" /></svg>
          </Slot>
          <Slot className="w-[58px]"><X size={16} color="#222" strokeWidth={1.2} /></Slot>
        </div>
      </div>
      <div className="flex h-[25px] shrink-0 items-center gap-[17px] bg-white pl-[8px] font-['Open_Sans',sans-serif] text-[13.9px] text-[#222]">
        {MENU.map(item => (
          <span key={item}>{item}</span>
        ))}
      </div>
      <Toolbar />
      <div className="flex min-h-0 flex-1">
        <DataPane />
        <Shelves />
        <ViewArea />
      </div>
      <Tabs />
      <StatusBar />
      <Taskbar />
    </div>
  );
}
